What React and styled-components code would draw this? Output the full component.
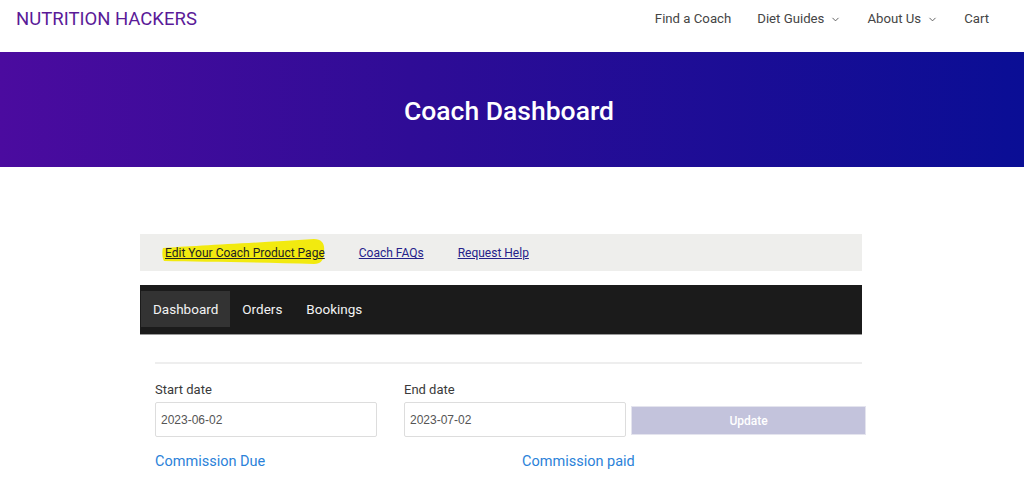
import React from 'react'
import styled, { createGlobalStyle } from 'styled-components'
import { ChevronDown } from 'lucide-react'

const GlobalStyle = createGlobalStyle`
    body {
        margin: 0;
        background: #fff;
        font-family: Roboto, "Noto Sans", sans-serif;
    }
`
const Header = styled.header`
    height: 52px;
    display: flex;
    justify-content: space-between;
    align-items: flex-start;
    padding: 7px 35px 0 16px;
    box-sizing: border-box;
`
const Logo = styled.a`
    font-size: 18.5px;
    line-height: 24px;
    color: #5a1a98;
    text-decoration: none;
`
const Nav = styled.nav`
    display: flex;
    gap: 26px;
    padding-top: 1px;
`
const NavItem = styled.a`
    display: flex;
    align-items: center;
    gap: 6px;
    font-size: 13.2px;
    line-height: 22px;
    color: #454545;
    text-decoration: none;
`
const Hero = styled.section`
    height: 115px;
    background: linear-gradient(90deg, #4b0b9f 0%, #2f0c96 40%, #0a0e95 100%);
    display: flex;
    align-items: center;
    justify-content: center;
`
const HeroTitle = styled.h1`
    margin: 0 6px 0 0;
    padding-top: 2px;
    color: #fff;
    font-size: 26.5px;
    font-weight: 500;
`
const Main = styled.main`
    width: 722px;
    margin: 67px 0 0 140px;
`
const LinkBar = styled.div`
    height: 37px;
    background: #eeeeec;
    display: flex;
    align-items: center;
    padding: 1px 0 0 25px;
    box-sizing: border-box;
    gap: 34px;
`
const TopLink = styled.a`
    position: relative;
    font-size: 12px;
    color: ${p => p.$dark ? '#222' : '#25218a'};
    text-decoration: underline;
    z-index: 0;
`
const Highlight = styled.svg`
    position: absolute;
    left: -3px;
    top: -8px;
    width: 163px;
    height: 27px;
    z-index: -1;
`
const TabBar = styled.div`
    margin-top: 14px;
    height: 50px;
    background: #1b1b1b;
    display: flex;
    align-items: flex-start;
    padding: 6px 0 0 1px;
    box-sizing: border-box;
    border-bottom: 1px solid #999;
`
const Tab = styled.a`
    height: 36px;
    display: flex;
    align-items: center;
    padding: 0 12px;
    font-size: 13.5px;
    color: #f2f2f2;
    background: ${p => p.$active ? '#333' : 'transparent'};
    text-decoration: none;
`
const Content = styled.div`
    padding: 0 0 0 15px;
`
const Divider = styled.hr`
    margin: 27px 0 0;
    border: none;
    border-top: 2px solid #eee;
`
const FormRow = styled.div`
    display: grid;
    grid-template-columns: 222px 222px 235px;
    column-gap: 27px;
    margin-top: 18px;
    align-items: end;
`
const Field = styled.label`
    display: flex;
    flex-direction: column;
    gap: 5px;
    font-size: 13px;
    color: #3a3a3a;
`
const DateInput = styled.input`
    height: 35px;
    box-sizing: border-box;
    border: 1px solid #ddd;
    border-radius: 2px;
    padding: 0 5px;
    font-family: "Liberation Sans", Arial, sans-serif;
    font-size: 12px;
    color: #555;
`
const UpdateButton = styled.button`
    width: 235px;
    height: 29px;
    margin: 0 0 2px -22px;
    border: 1px solid #e4e4ee;
    background: #c3c3dc;
    color: #fff;
    font-family: Roboto, sans-serif;
    font-weight: 500;
    font-size: 12px;
`
const Stats = styled.div`
    display: grid;
    grid-template-columns: 367px 1fr;
    margin-top: 16px;
`
const StatLink = styled.a`
    font-size: 14.5px;
    color: #2b82d9;
    text-decoration: none;
`

const App = () => {
    return (
        <>
            <GlobalStyle />
            <Header>
                <Logo href='#'>NUTRITION HACKERS</Logo>
                <Nav>
                    <NavItem href='#'>Find a Coach</NavItem>
                    <NavItem href='#'>Diet Guides <ChevronDown size={11} strokeWidth={2} color='#555' /></NavItem>
                    <NavItem href='#'>About Us <ChevronDown size={11} strokeWidth={2} color='#555' /></NavItem>
                    <NavItem href='#'>Cart</NavItem>
                </Nav>
            </Header>
            <Hero>
                <HeroTitle>Coach Dashboard</HeroTitle>
            </Hero>
            <Main>
                <LinkBar>
                    <TopLink href='#' $dark>
                        <Highlight viewBox='0 0 163 27'>
                            <path d='M1 10 C30 8 90 5 152 1 C160 1 163 6 162 13 C162 21 160 26 152 26 C100 24 40 24 2 23 C0 20 0 13 1 10 Z' fill='#f2ea0f' />
                        </Highlight>
                        Edit Your Coach Product Page
                    </TopLink>
                    <TopLink href='#'>Coach FAQs</TopLink>
                    <TopLink href='#'>Request Help</TopLink>
                </LinkBar>
                <TabBar>
                    <Tab href='#' $active>Dashboard</Tab>
                    <Tab href='#'>Orders</Tab>
                    <Tab href='#'>Bookings</Tab>
                </TabBar>
                <Content>
                    <Divider />
                    <FormRow>
                        <Field>
                            Start date
                            <DateInput type='text' defaultValue='2023-06-02' />
                        </Field>
                        <Field>
                            End date
                            <DateInput type='text' defaultValue='2023-07-02' />
                        </Field>
                        <UpdateButton>Update</UpdateButton>
                    </FormRow>
                    <Stats>
                        <StatLink href='#'>Commission Due</StatLink>
                        <StatLink href='#'>Commission paid</StatLink>
                    </Stats>
                </Content>
            </Main>
        </>
    )
}

export default App
